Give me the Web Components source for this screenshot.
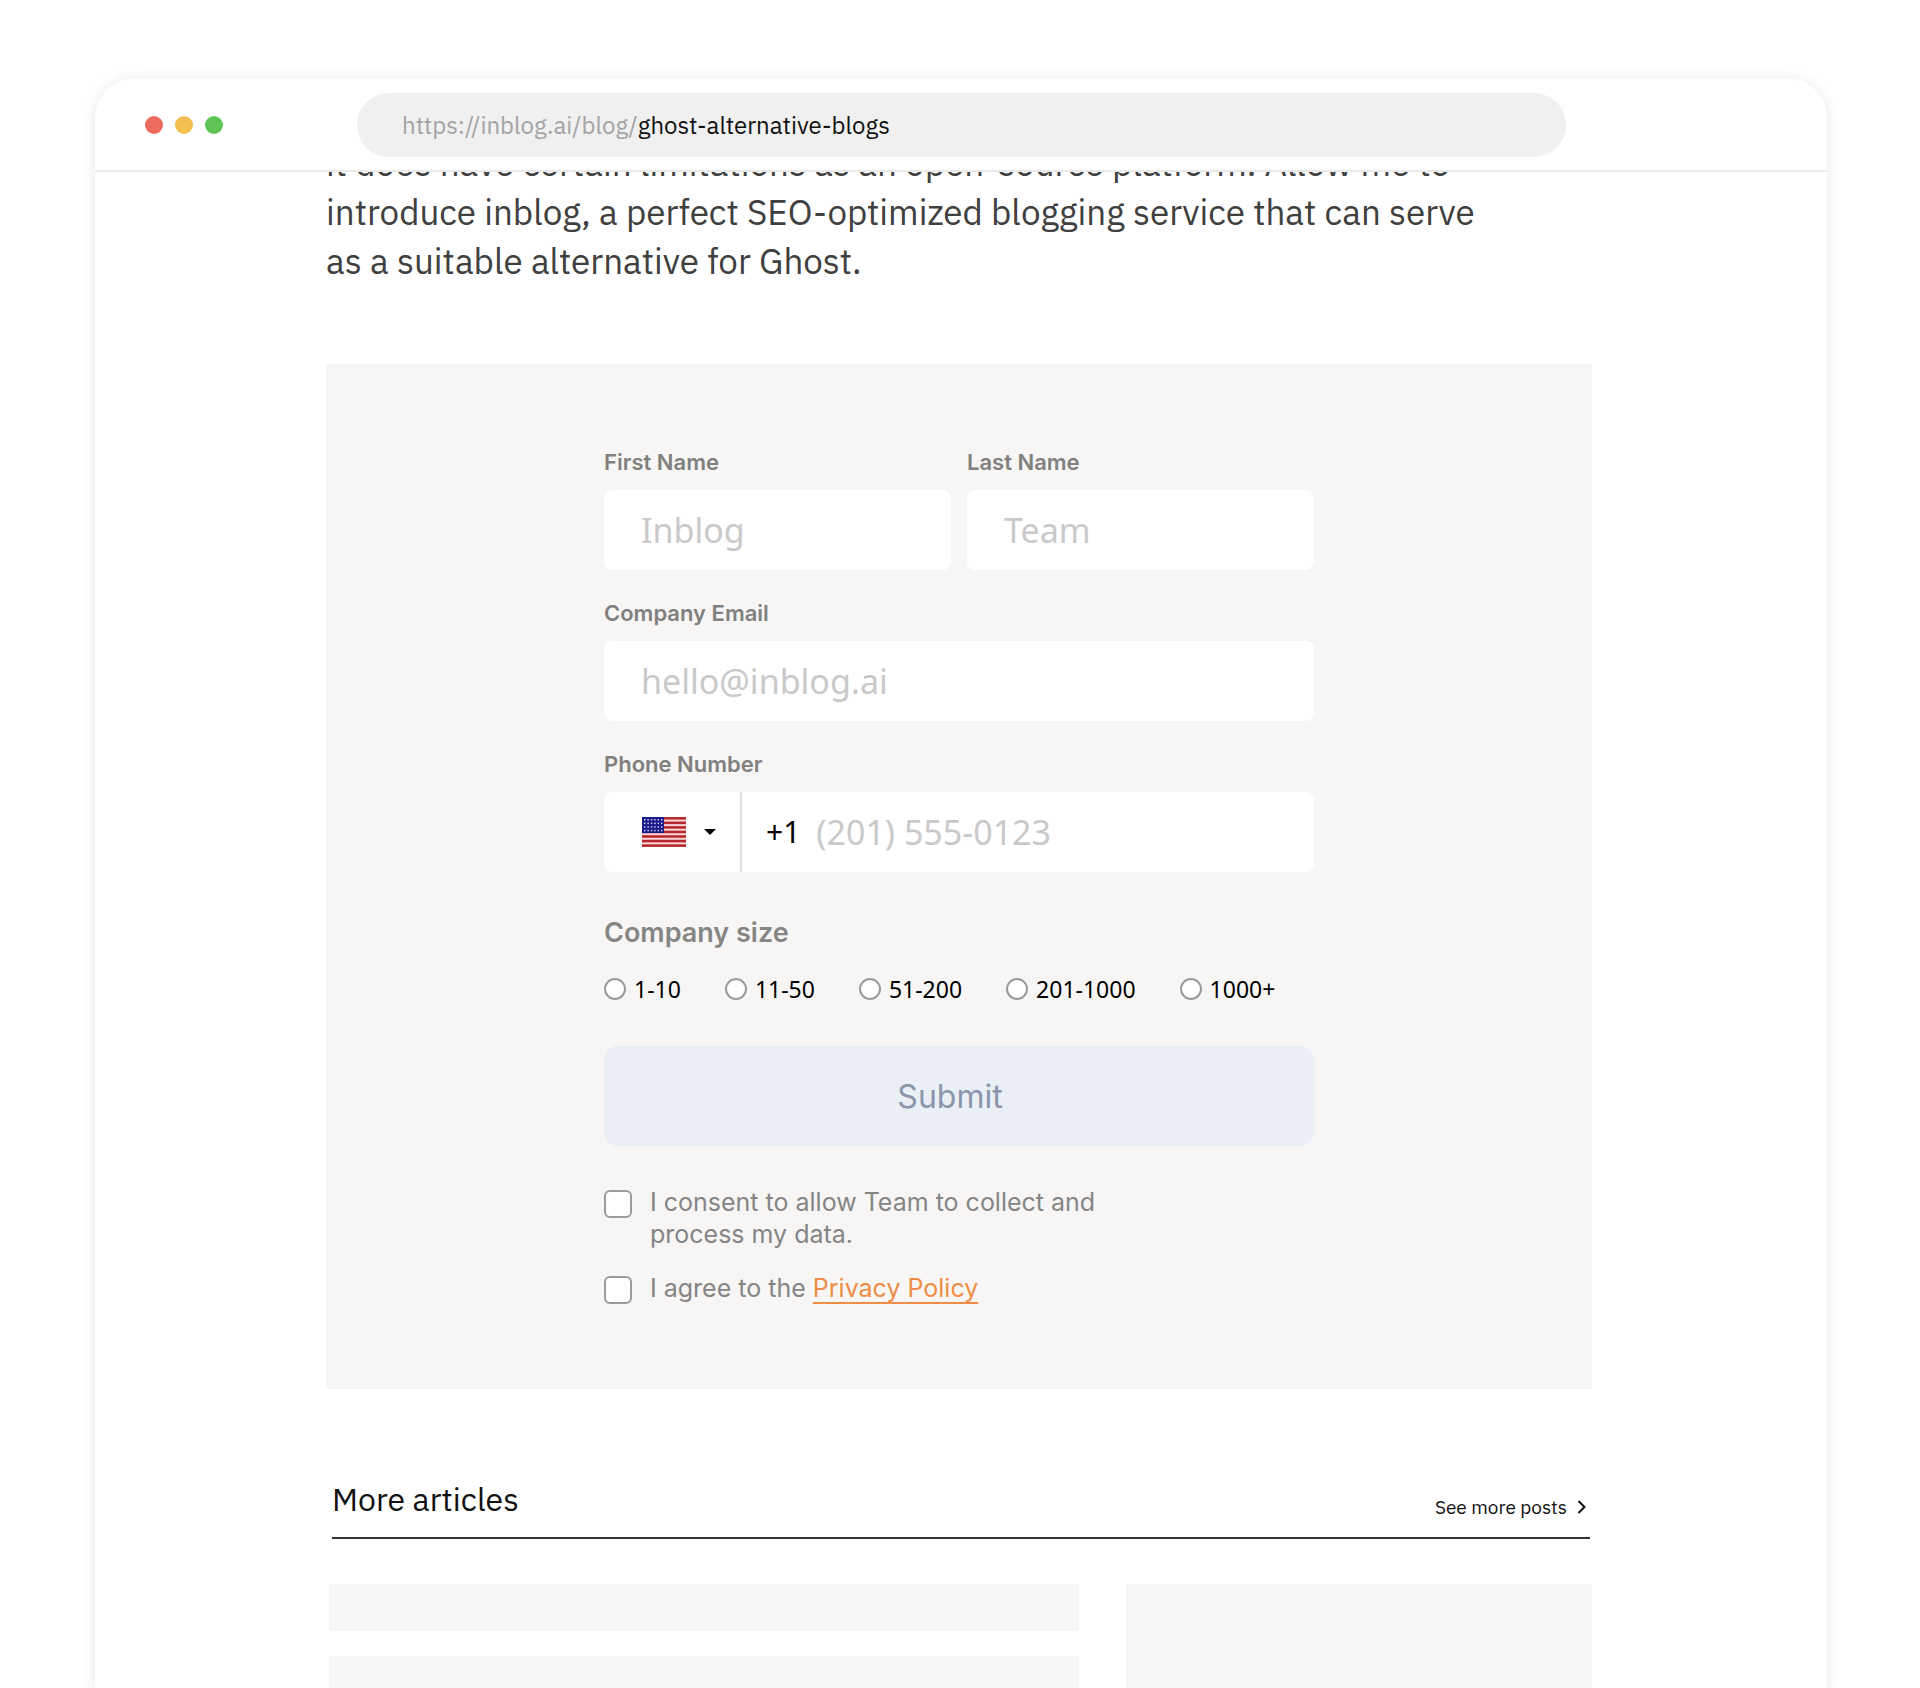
<!DOCTYPE html>
<html lang="en">
<head>
<meta charset="utf-8">
<meta name="viewport" content="width=device-width, initial-scale=1">
<title>ghost-alternative-blogs</title>
<style>
  html, body { margin: 0; background: #fff; }
  body {
    --reading: "IBM Plex Sans", "Open Sans", sans-serif;
    --label: "Inter", sans-serif;
    --field: "Noto Sans", sans-serif;
    --panel: #f7f6f4;
    --muted: #80807f;
    --placeholder: #c9c9ca;
    font-family: var(--reading);
    color: #111;
  }
</style>
</head>
<body>
<browser-window>
  <span slot="origin">https://inblog.ai/blog/</span>
  <span slot="slug">ghost-alternative-blogs</span>
  <article-text>it does have certain limitations as an open-source platform. Allow me to introduce inblog, a perfect SEO-optimized blogging service that can serve as a suitable alternative for Ghost.</article-text>
  <lead-form>
    <field-row>
      <text-field label="First Name" placeholder="Inblog" autocomplete="given-name"></text-field>
      <text-field label="Last Name" placeholder="Team" autocomplete="family-name"></text-field>
    </field-row>
    <text-field label="Company Email" type="email" placeholder="hello@inblog.ai" autocomplete="email"></text-field>
    <phone-field label="Phone Number" prefix="+1" placeholder="(201) 555-0123"></phone-field>
    <size-choice slot="choices" label="Company size" options="1-10,11-50,51-200,201-1000,1000+"></size-choice>
    <submit-button slot="action">Submit</submit-button>
    <consent-check slot="consents">I consent to allow Team to collect and process my data.</consent-check>
    <consent-check slot="consents">I agree to the <text-link href="#privacy">Privacy Policy</text-link></consent-check>
  </lead-form>
  <more-articles heading="More articles" link="See more posts"></more-articles>
</browser-window>

<script>
const define = (name, html, setup) => {
  const template = document.createElement('template');
  template.innerHTML = html;
  customElements.define(name, class extends HTMLElement {
    connectedCallback() {
      if (this.shadowRoot) return;
      const root = this.attachShadow({ mode: 'open' });
      root.append(template.content.cloneNode(true));
      if (setup) setup(this, root);
    }
  });
};

define('browser-window', `
  <style>
    :host { display: flex; flex-direction: column; box-sizing: border-box; min-height: 100vh; padding: 78px 93px 0 95px; overflow: hidden; }
    .window { flex: 1; display: flex; flex-direction: column; border-radius: 40px 40px 0 0; background: #fff; box-shadow: 0 2px 14px rgba(0,0,0,.1); overflow: hidden; }
    header { display: flex; align-items: center; gap: 134px; padding: 15px 261px 13px 50px; border-bottom: 2px solid #e9e9e9; }
    .dots { display: flex; gap: 12px; }
    .dots i { width: 18px; height: 18px; border-radius: 50%; background: #ed6a5e; }
    .dots i:nth-child(2) { background: #f3bf4f; }
    .dots i:nth-child(3) { background: #60c454; }
    .url { flex: 1; min-width: 0; box-sizing: border-box; padding: 0 45px; border-radius: 32px; background: #f0f0f0; font-size: 24px; line-height: 64px; white-space: nowrap; overflow: hidden; color: #111; display: flex; }
    .origin { color: #a3a3a3; }
    main { flex: 1; display: flex; flex-direction: column; padding: 0 235px 0 231px; overflow: hidden; }
  </style>
  <div class="window">
    <header>
      <div class="dots" aria-hidden="true"><i></i><i></i><i></i></div>
      <div class="url"><span class="origin"><slot name="origin"></slot></span><slot name="slug"></slot></div>
    </header>
    <main><slot></slot></main>
  </div>`);

/* The article is scrolled: its first visible line sits partly under the toolbar. */
define('article-text', `
  <style>
    :host { display: block; margin-top: -33px; }
    p { margin: 0; max-width: 1180px; font-size: 35px; line-height: 49px; color: #404040; }
  </style>
  <p><slot></slot></p>`);

define('lead-form', `
  <style>
    :host { display: block; margin-top: 78px; padding: 83px 40px 85px; background: var(--panel); }
    form { display: flex; flex-direction: column; max-width: 710px; margin: 0 auto; }
    .fields { display: flex; flex-direction: column; gap: 28px; }
    .choices { margin-top: 44px; }
    .action { margin-top: 41px; }
    .consents { display: flex; flex-direction: column; align-items: flex-start; gap: 22px; margin-top: 40px; }
  </style>
  <form>
    <div class="fields"><slot></slot></div>
    <div class="choices"><slot name="choices"></slot></div>
    <div class="action"><slot name="action"></slot></div>
    <div class="consents"><slot name="consents"></slot></div>
  </form>`);

define('field-row', `
  <style>:host { display: grid; grid-template-columns: 1fr 1fr; gap: 16px; }</style>
  <slot></slot>`);

const fieldStyle = `
  :host { display: flex; flex-direction: column; gap: 13px; min-width: 0; }
  label.title { font: 600 22px/30px var(--label); color: var(--muted); }
  input { box-sizing: border-box; min-width: 0; width: 100%; height: 80px; margin: 0; padding: 0 37px; border: 0; border-radius: 8px; background: #fff; font: 34px var(--field); color: #111; }
  input::placeholder { color: var(--placeholder); opacity: 1; }`;

define('text-field', `
  <style>${fieldStyle}</style>
  <label class="title" for="input"></label>
  <input id="input">`,
  (host, root) => {
    root.querySelector('label').textContent = host.getAttribute('label');
    const input = root.querySelector('input');
    input.type = host.getAttribute('type') || 'text';
    input.placeholder = host.getAttribute('placeholder');
    input.autocomplete = host.getAttribute('autocomplete');
  });

define('us-flag', `
  <style>:host, svg { display: block; }</style>
  <svg width="44" height="30" viewBox="0 0 44 30" aria-hidden="true">
    <rect width="44" height="30" fill="#fbd9dc"/>
    <g fill="#b8282c" id="stripes"></g>
    <rect width="22" height="16" fill="#1a1a8c"/>
    <g fill="#c9c9f0" id="stars"></g>
  </svg>`,
  (host, root) => {
    const ns = 'http://www.w3.org/2000/svg';
    const rect = (group, x, y, w, h) => {
      const r = document.createElementNS(ns, 'rect');
      Object.entries({ x, y, width: w, height: h }).forEach(([k, v]) => r.setAttribute(k, v));
      root.getElementById(group).append(r);
    };
    for (let i = 0; i < 7; i++) rect('stripes', 0, i * 4.55, 44, 2.6);
    for (let y = 0; y < 4; y++) for (let x = 0; x < 6; x++) rect('stars', 2 + x * 3.4, 2 + y * 3.6, 1.5, 1.5);
  });

define('phone-field', `
  <style>${fieldStyle}
    .box { display: flex; align-items: center; height: 80px; border-radius: 8px; background: #fff; overflow: hidden; }
    .country { display: grid; box-sizing: border-box; width: 138px; height: 80px; border-right: 2px solid #dedede; }
    .country > * { grid-area: 1 / 1; }
    .face { display: flex; align-items: center; gap: 18px; padding-left: 38px; pointer-events: none; }
    select { width: 100%; opacity: 0; }
    .prefix { padding-left: 24px; font: 30px/40px var(--field); color: #000; }
    input { flex: 1; padding: 0 16px; }
  </style>
  <label class="title" for="input"></label>
  <div class="box">
    <div class="country">
      <select aria-label="Country"><option value="US">US</option></select>
      <span class="face"><us-flag></us-flag><svg width="12" height="6" viewBox="0 0 12 6" aria-hidden="true"><path d="M0 0h12L6 6z"/></svg></span>
    </div>
    <span class="prefix"></span>
    <input id="input" type="tel" autocomplete="tel-national">
  </div>`,
  (host, root) => {
    root.querySelector('label').textContent = host.getAttribute('label');
    root.querySelector('.prefix').textContent = host.getAttribute('prefix');
    root.querySelector('input').placeholder = host.getAttribute('placeholder');
  });

define('size-choice', `
  <style>
    :host { display: block; }
    fieldset { margin: 0; padding: 0; border: 0; min-width: 0; }
    legend { padding: 0; font: 600 27px/34px var(--label); color: #858584; }
    .options { display: flex; gap: 44px; margin-top: 23px; }
    label { display: flex; align-items: center; gap: 8px; font: 23px/32px var(--field); color: #000; white-space: nowrap; }
    input { appearance: none; box-sizing: border-box; width: 22px; height: 22px; margin: 0; border: 2px solid #9b9b9b; border-radius: 50%; background: #fff; }
    input:checked { border: 7px solid #ef8d47; }
  </style>
  <fieldset><legend></legend><div class="options"></div></fieldset>`,
  (host, root) => {
    root.querySelector('legend').textContent = host.getAttribute('label');
    for (const option of host.getAttribute('options').split(',')) {
      const label = document.createElement('label');
      const input = document.createElement('input');
      input.type = 'radio';
      input.name = 'company-size';
      input.value = option;
      label.append(input, option);
      root.querySelector('.options').append(label);
    }
  });

define('submit-button', `
  <style>
    :host { display: block; }
    button { display: block; width: 100%; height: 100px; padding: 0 18px 0 0; border: 0; border-radius: 14px; background: #e9eff5; font: 32px var(--label); color: #8a95ab; }
  </style>
  <button type="submit"><slot></slot></button>`);

define('consent-check', `
  <style>
    :host { display: block; }
    label { display: flex; align-items: flex-start; gap: 18px; max-width: 510px; font: 25px/32px var(--label); color: #858585; }
    input { appearance: none; flex: none; box-sizing: border-box; width: 28px; height: 28px; margin: 4px 0 0; border: 2px solid #9b9b9b; border-radius: 6px; background: #fff; }
    input:checked { background: #ef8d47; }
  </style>
  <label><input type="checkbox"><span><slot></slot></span></label>`);

define('text-link', `
  <style>
    :host { display: inline; }
    a { color: #ef8d47; text-decoration: underline; text-decoration-thickness: 2px; text-decoration-skip-ink: none; text-underline-offset: 5px; }
  </style>
  <a><slot></slot></a>`,
  (host, root) => { root.querySelector('a').href = host.getAttribute('href'); });

define('more-articles', `
  <style>
    :host { flex: 1; display: flex; flex-direction: column; margin-top: 89px; }
    header { display: flex; justify-content: space-between; align-items: flex-end; margin: 0 2px 0 6px; padding-bottom: 17px; border-bottom: 2px solid #333; }
    h2 { margin: 0; font-size: 32px; font-weight: 400; line-height: 42px; color: #111; }
    a { display: flex; align-items: center; gap: 10px; padding-right: 4px; font-size: 19px; line-height: 26px; color: #111; text-decoration: none; }
    .cards { flex: 1; display: grid; grid-template-columns: 29fr 18fr; gap: 47px; margin: 45px 0 0 3px; }
    .stack { display: grid; grid-template-rows: 47px 1fr; gap: 25px; }
    .block { background: var(--panel); }
    .cards > .block { min-height: 104px; }
  </style>
  <header>
    <h2></h2>
    <a href="#posts"><span></span><svg width="9" height="14" viewBox="0 0 9 14" fill="none" stroke="#111" stroke-width="2" aria-hidden="true"><path d="M1.5 1l6 6-6 6"/></svg></a>
  </header>
  <div class="cards">
    <div class="stack"><div class="block"></div><div class="block"></div></div>
    <div class="block"></div>
  </div>`,
  (host, root) => {
    root.querySelector('h2').textContent = host.getAttribute('heading');
    root.querySelector('a span').textContent = host.getAttribute('link');
  });
</script>
</body>
</html>
